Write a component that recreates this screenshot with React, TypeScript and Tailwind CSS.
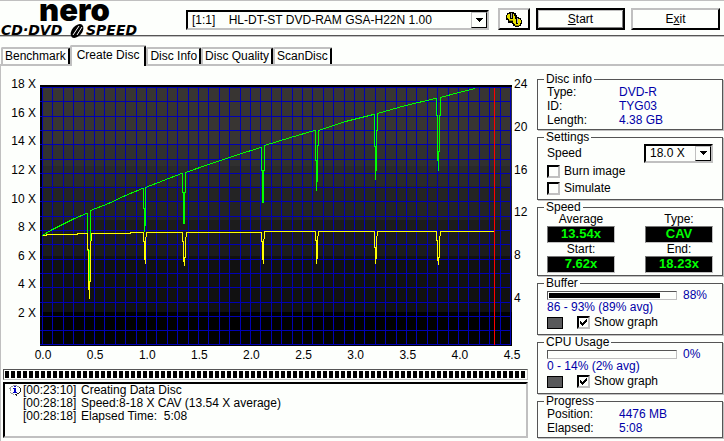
import { useState } from "react";
import type { ReactNode } from "react";
import clsx from "clsx";

const TABS = ["Benchmark", "Create Disc", "Disc Info", "Disc Quality", "ScanDisc"];

const LOG = [
  { time: "[00:23:10]", text: "Creating Data Disc", info: true },
  { time: "[00:28:18]", text: "Speed:8-18 X CAV (13.54 X average)" },
  { time: "[00:28:18]", text: "Elapsed Time:  5:08" },
];

const SPEED_LABELS = [18, 16, 14, 12, 10, 8, 6, 4, 2];
const RPM_LABELS = [24, 20, 16, 12, 8, 4];
const SIZE_LABELS = ["0.0", "0.5", "1.0", "1.5", "2.0", "2.5", "3.0", "3.5", "4.0", "4.5"];

const SHADES = [
  { y: 85, color: "#383532" },
  { y: 145, color: "#303030" },
  { y: 166, color: "#2a2a2a" },
  { y: 186, color: "#242424" },
  { y: 220, color: "#1c1c1c" },
  { y: 256, color: "#111111" },
  { y: 312, color: "#000000" },
];

const GREEN =
  "42,235 52,229 62,224 74,218 86,213 87,213 87,250 88,250 88,281 89,281 89,250 90,250 90,210 108,203 125,195 142,188 143,188 143,208 144,208 144,231 145,220 145,187 163,180 181,173 182,173 182,192 183,192 183,223 184,223 184,192 185,192 185,172 208,164 235,155 260,147 261,147 261,170 262,170 262,202 263,202 263,170 264,170 264,145 290,137 314,130 315,130 315,160 316,160 316,190 317,174 317,145 318,145 318,130 345,121 373,114 374,114 374,146 375,146 375,179 376,162 376,130 377,130 377,113 405,105 435,98 436,98 436,115 437,115 437,151 438,170 438,151 439,151 439,115 440,115 440,97 458,92 475,88";

const YELLOW =
  "42,235 46,235 46,234 77,234 77,233 87,233 87,249 88,249 88,281 89,298 89,281 90,281 90,249 91,233 130,233 130,232 143,232 143,241 144,241 144,255 145,263 145,241 146,232 182,232 182,241 183,241 183,257 184,265 184,257 185,257 185,241 186,232 261,232 261,241 262,241 262,255 263,263 263,247 264,231 315,231 315,240 316,240 316,263 317,254 317,240 318,231 374,231 374,247 375,247 375,263 376,255 376,240 377,231 436,231 436,240 437,240 437,257 438,264 438,257 439,257 439,240 440,231 494,231";

const sunken = "border-2 border-t-black border-l-black border-r-[#c0c0c0] border-b-[#c0c0c0]";
const thinSunken = "border border-t-[#555] border-l-[#555] border-r-[#c0c0c0] border-b-[#c0c0c0]";

const Logo = () => (
  <svg className="h-[34px] w-[150px] shrink-0 overflow-visible" viewBox="0 0 150 34" role="img" aria-label="nero CD-DVD SPEED">
    <text x="39" y="20" fontFamily="Inter" fontSize="31" fontWeight="900">nero</text>
    <text x="1" y="34" fontFamily="DejaVu Sans" fontSize="14" fontWeight="700" fontStyle="italic">CD·DVD</text>
    <text x="86" y="34" fontFamily="DejaVu Sans" fontSize="14" fontWeight="700" fontStyle="italic">SPEED</text>
    <ellipse cx="77" cy="30" rx="8" ry="5" transform="rotate(-50 77 30)" />
    <path d="M73 34 79 25M77 34 82 26" stroke="#fff" strokeWidth="1" />
  </svg>
);

const DiscsIcon = () => (
  <svg className="h-4 w-4" viewBox="0 0 16 16" shapeRendering="crispEdges" aria-hidden="true">
    <path d="M3 1h5v1h2v2h1v2h2v1h2v2h1v4h-1v2h-2v1H9v-1H7v-2H6v-1H2V9H0V4h1V2h2z" fill="#000" />
    <path d="M2 3h2v5H2V7H1V4h1zM7 3h1v2h1v3H7zM3 8h5v1H3zM8 8h2v5H8v-1H7V9h1zM12 8h2v1h1v3h-1v2h-2zM9 13h4v1H9z" fill="#e6e000" />
    <path d="M3 9h4v1H3zM9 14h4v1H9z" fill="#8c8800" />
    <path d="M5 2h1v5H5zM11 7h1v5h-1z" fill="#aaa" />
  </svg>
);

const InfoIcon = () => (
  <svg className="h-[13px] w-3" viewBox="0 0 12 13" shapeRendering="crispEdges" aria-hidden="true">
    <path d="M4 1h4M2 2h2M8 2h2M1 3h1M0 4h1v3M1 8h1M2 9h2M4 10h1" stroke="#999" fill="none" />
    <path d="M10 3h1v1h1v4h-1v1h-1v1H8v2H7v-1H6v-1h2V9h2V8h1V4h-1z" fill="#222" />
    <path d="M5 2h2v1H5zM4 4h3v4h1v1H4V8h1V5H4z" fill="#0000c8" />
  </svg>
);

type SelectProps = { label: string; value: string; className?: string; id?: string };

const Select = ({ label, value, className, id }: SelectProps) => (
  <div className={clsx("relative", sunken, className)}>
    <select id={id} aria-label={label} className="block h-full w-full appearance-none bg-transparent pr-4 pl-1 outline-none">
      <option>{value}</option>
    </select>
    <span className="pointer-events-none absolute inset-y-0 right-0 flex w-4 items-center justify-center border border-t-[#c0c0c0] border-r-black border-b-black border-l-[#c0c0c0] bg-[#fdfffc]">
      <svg className="h-1 w-[7px]" viewBox="0 0 7 4" shapeRendering="crispEdges">
        <path d="M0 0h7v1H6v1H5v1H4v1H3V3H2V2H1V1H0z" />
      </svg>
    </span>
  </div>
);

const Checkbox = ({ label, checked = false }: { label: string; checked?: boolean }) => {
  const [on, setOn] = useState(checked);
  return (
    <label className="flex h-[17px] items-center gap-1">
      <span className="relative h-[13px] w-[13px]">
        <input
          type="checkbox"
          checked={on}
          onChange={() => setOn(!on)}
          className={clsx("block h-[13px] w-[13px] appearance-none", sunken)}
        />
        {on && (
          <svg className="pointer-events-none absolute inset-0" viewBox="0 0 13 13" shapeRendering="crispEdges">
            <path d="M3 5h1v1h1v1h1V6h1V5h1V4h1V3h1v3H9v1H8v1H7v1H6v1H5V9H4V8H3z" />
          </svg>
        )}
      </span>
      {label}
    </label>
  );
};

const Group = ({ title, children }: { title: string; children: ReactNode }) => (
  <fieldset className="min-w-0 border border-[#555] px-[9px] pt-px pb-[2px] shadow-[1px_1px_0_#c0c0c0]">
    <legend className="-ml-[3px] h-[10px] px-[2px] leading-[10px]">{title}</legend>
    {children}
  </fieldset>
);

const Row = ({ label, value }: { label: string; value: string }) => (
  <div className="flex h-[14px] items-center">
    <dt className="w-[72px]">{label}</dt>
    <dd className="text-[#0000a8]">{value}</dd>
  </div>
);

const Readout = ({ label, value }: { label: string; value: string }) => (
  <div className="w-[68px] text-center">
    <div className="h-[13px] leading-[13px]">{label}</div>
    <div className="h-[17px] border border-t-[#777] border-l-[#777] border-r-[#c0c0c0] border-b-[#c0c0c0] bg-black text-[13px] leading-[14px] font-bold text-[#00ff00]">
      {value}
    </div>
  </div>
);

const Usage = ({ title, percent, range }: { title: string; percent: number; range: string }) => (
  <Group title={title}>
    <div className="flex h-3 items-center gap-[6px]">
      <div className={clsx("h-[9px] w-[130px] p-px", thinSunken)}>
        <div className="h-full bg-black" style={{ width: `${percent}%` }} />
      </div>
      <span className="text-[#0000a8]">{percent}%</span>
    </div>
    <div className="h-[13px] leading-[13px] text-[#0000a8]">{range}</div>
    <div className="flex items-center gap-[14px] pb-px">
      <button aria-label={`${title} graph colour`} className="h-3 w-4 border border-black bg-[#58595a]" />
      <Checkbox label="Show graph" checked />
    </div>
  </Group>
);

const SpeedChart = () => (
  <svg className="mt-[7px] h-[261px] min-w-0 flex-1" viewBox="40 85 472 261" preserveAspectRatio="none" shapeRendering="crispEdges">
    {SHADES.map((s) => (
      <rect key={s.y} x="40" y={s.y} width="472" height={346 - s.y} fill={s.color} />
    ))}
    <path d="M40 86h472M41 85v261" stroke="#000" strokeWidth="2" />
    <g fill="#0000b4">
      {Array.from({ length: 46 }, (_, i) => (
        <rect key={i} x={Math.round(42 + i * 10.4)} y="87" width="1" height="258" />
      ))}
      {Array.from({ length: 19 }, (_, i) => (
        <rect key={i} x="40" y={Math.round(87 + i * 14.3)} width="471" height="1" />
      ))}
    </g>
    <g fill="none" transform="translate(0.5 0.5)">
      <polyline points={GREEN} stroke="#00ff00" />
      <polyline points={YELLOW} stroke="#ffff00" />
      <path d="M494 87v257" stroke="#ff0000" />
    </g>
  </svg>
);

const App = () => {
  const [tab, setTab] = useState("Create Disc");

  return (
    <div className="bg-[#fdfffc] font-['Liberation_Sans',sans-serif] text-[12px] leading-[13px] text-black">
      <header className="flex h-9 items-start border-t border-b border-t-[#c0c0c0] border-b-[#555] pr-1 shadow-[0_1px_0_#c0c0c0]">
        <Logo />
        <Select
          label="Drive"
          value={"[1:1]\u00a0\u00a0\u00a0\u00a0HL-DT-ST DVD-RAM GSA-H22N 1.00"}
          className="mt-[9px] ml-9 h-5 min-w-0 flex-1"
        />
        <div className="mt-[7px] ml-[9px] flex h-[22px] gap-[6px]">
          <button aria-label="Options" className="flex w-8 items-center justify-center border-2 border-t-[#c0c0c0] border-r-black border-b-black border-l-[#c0c0c0]">
            <DiscsIcon />
          </button>
          <button className="w-[89px] border-2 border-t-black border-r-black border-b-black border-l-black shadow-[inset_1px_1px_0_#c0c0c0,inset_-1px_-1px_0_#808080]">
            <u>S</u>tart
          </button>
          <button className="w-[89px] border-2 border-t-[#c0c0c0] border-r-black border-b-black border-l-[#c0c0c0]">
            E<u>x</u>it
          </button>
        </div>
      </header>

      <nav role="tablist" className="flex h-[30px] items-end border-b-2 border-[#c0c0c0] pl-px">
        {TABS.map((name) => (
          <button
            key={name}
            role="tab"
            aria-selected={tab === name}
            onClick={() => setTab(name)}
            className={clsx(
              "rounded-t-[2px] border-t-2 border-l-2 border-r-2 border-t-[#c0c0c0] border-l-[#c0c0c0] whitespace-nowrap",
              tab === name
                ? "-mb-[2px] h-[21px] border-r-black bg-[#fdfffc] px-[5px] pb-[3px]"
                : "h-[17px] border-r-black px-[2px]",
            )}
          >
            {name}
          </button>
        ))}
      </nav>

      <main className="flex items-start gap-[9px] border-l border-[#c0c0c0] pr-px pb-[3px]">
        <section className="min-w-0 flex-1 pt-[12px]">
          <div className="flex">
            <div className="flex h-[241px] w-[39px] flex-col justify-between pr-1 text-right leading-[12px]">
              {SPEED_LABELS.map((n) => (
                <span key={n}>{n} X</span>
              ))}
            </div>
            <SpeedChart />
            <div className="flex h-[226px] w-4 flex-col justify-between pl-[2px] leading-[12px]">
              {RPM_LABELS.map((n) => (
                <span key={n}>{n}</span>
              ))}
            </div>
          </div>
          <div className="mt-[3px] mr-[6px] ml-8 flex justify-between leading-[12px]">
            {SIZE_LABELS.map((n) => (
              <span key={n} className="w-5 text-center">{n}</span>
            ))}
          </div>

          <div className={clsx("mt-2 ml-[2px] h-[11px] p-px", thinSunken)}>
            <div className="h-full bg-[repeating-linear-gradient(90deg,#000_0_4px,transparent_4px_6px)]" />
          </div>

          <ul className={clsx("mt-[2px] ml-[2px] h-[56px] overflow-hidden", sunken)}>
            {LOG.map((line) => (
              <li key={line.text} className="flex h-[13px] items-center pl-1 whitespace-pre">
                <span className="w-[14px]">{line.info && <InfoIcon />}</span>
                <span className="w-[58px]">{line.time}</span>
                <span>{line.text}</span>
              </li>
            ))}
          </ul>
        </section>

        <aside className="flex w-[186px] shrink-0 flex-col gap-[2px] pt-2">
          <Group title="Disc info">
            <dl>
              <Row label="Type:" value="DVD-R" />
              <Row label="ID:" value="TYG03" />
              <Row label="Length:" value="4.38 GB" />
            </dl>
          </Group>

          <Group title="Settings">
            <div className="flex h-5 items-center justify-between">
              <label htmlFor="speed">Speed</label>
              <Select id="speed" label="Speed" value="18.0 X" className="h-[19px] w-[69px]" />
            </div>
            <Checkbox label="Burn image" />
            <Checkbox label="Simulate" />
          </Group>

          <Group title="Speed">
            <div className="flex flex-wrap justify-between">
              <Readout label="Average" value="13.54x" />
              <Readout label="Type:" value="CAV" />
              <Readout label="Start:" value="7.62x" />
              <Readout label="End:" value="18.23x" />
            </div>
          </Group>

          <Usage title="Buffer" percent={88} range="86 - 93% (89% avg)" />
          <Usage title="CPU Usage" percent={0} range="0 - 14% (2% avg)" />

          <Group title="Progress">
            <dl>
              <Row label="Position:" value="4476 MB" />
              <Row label="Elapsed:" value="5:08" />
            </dl>
          </Group>
        </aside>
      </main>
    </div>
  );
};

export default App;
